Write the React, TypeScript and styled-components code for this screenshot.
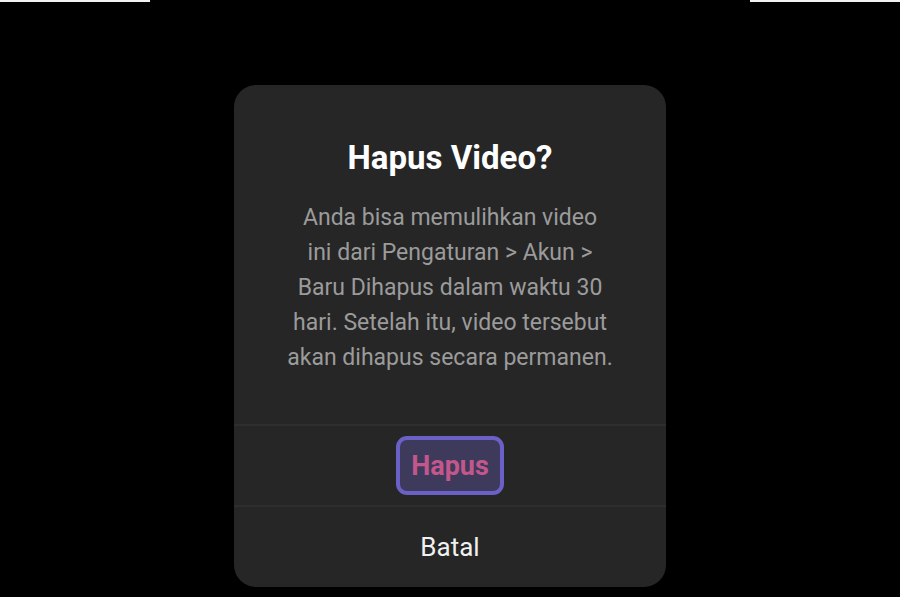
import styled, { createGlobalStyle } from 'styled-components';

const GlobalStyle = createGlobalStyle`
  html, body {
    margin: 0;
    padding: 0;
    background: #000;
  }
  body {
    font-family: Roboto, "Noto Sans", "Liberation Sans", sans-serif;
  }
`;

function App() {
  return (
    <SPage>
      <GlobalStyle />
      <STopBar>
        <STopLine />
        <STopLine />
      </STopBar>
      <SDialog>
        <SHeader>
          <STitle>Hapus Video?</STitle>
          <SMessage>
            Anda bisa memulihkan video
            <br />
            ini dari Pengaturan &gt; Akun &gt;
            <br />
            Baru Dihapus dalam waktu 30
            <br />
            hari. Setelah itu, video tersebut
            <br />
            akan dihapus secara permanen.
          </SMessage>
        </SHeader>
        <SActionRow>
          <SDeleteButton>Hapus</SDeleteButton>
        </SActionRow>
        <SActionRow>
          <SCancelButton>Batal</SCancelButton>
        </SActionRow>
      </SDialog>
    </SPage>
  );
}

const SPage = styled.div`
  width: 900px;
  height: 597px;
  background: #000;
  overflow: hidden;
`;

const STopBar = styled.div`
  display: flex;
  justify-content: space-between;
  height: 2px;
`;

const STopLine = styled.div`
  width: 150px;
  height: 2px;
  background: #f2f2f2;
`;

const SDialog = styled.div`
  width: 432px;
  height: 502px;
  margin: 83px auto 0 auto;
  background: #262626;
  border-radius: 22px;
  display: flex;
  flex-direction: column;
  overflow: hidden;
`;

const SHeader = styled.div`
  height: 341px;
  display: flex;
  flex-direction: column;
  align-items: center;
  padding-top: 53px;
  box-sizing: border-box;
  border-bottom: 2px solid #2e2e2e;
`;

const STitle = styled.h2`
  margin: 0;
  font-size: 33px;
  line-height: 40px;
  font-weight: 700;
  color: #fff;
`;

const SMessage = styled.p`
  margin: 22px 0 0 0;
  font-size: 23px;
  line-height: 35px;
  color: #9b9b9b;
  text-align: center;
`;

const SActionRow = styled.div`
  height: 79px;
  display: flex;
  align-items: center;
  justify-content: center;
  & + & {
    border-top: 2px solid #2e2e2e;
  }
`;

const SDeleteButton = styled.button`
  width: 108px;
  height: 59px;
  box-sizing: border-box;
  border: 4px solid #6b60c6;
  border-radius: 11px;
  background: #3d3a5c;
  color: #c3578b;
  font-family: Roboto, "Liberation Sans", sans-serif;
  font-size: 27px;
  font-weight: 700;
  padding: 0;
`;

const SCancelButton = styled.button`
  border: none;
  background: none;
  color: #f0f0f0;
  font-family: Roboto, "Liberation Sans", sans-serif;
  font-size: 26px;
  padding: 0;
`;

export default App;
